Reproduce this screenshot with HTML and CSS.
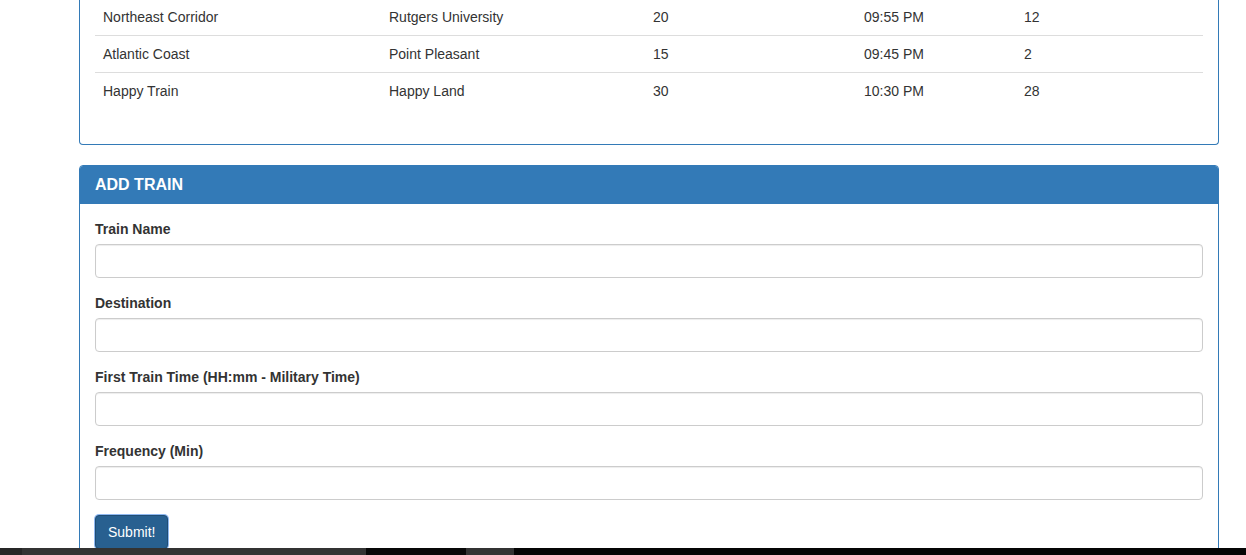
FILE: index.html
```html
<!DOCTYPE html>
<html>
<head>
<meta charset="utf-8">
<title>Train Scheduler</title>
<link rel="stylesheet" href="styles.css">
</head>
<body>
<main class="page">
  <section class="panel">
    <div class="panel-body">
      <table class="table">
        <colgroup>
          <col class="c1"><col class="c2"><col class="c3"><col class="c4"><col class="c5">
        </colgroup>
        <tbody>
          <tr class="first"><td>Northeast Corridor</td><td>Rutgers University</td><td>20</td><td>09:55 PM</td><td>12</td></tr>
          <tr><td>Atlantic Coast</td><td>Point Pleasant</td><td>15</td><td>09:45 PM</td><td>2</td></tr>
          <tr><td>Happy Train</td><td>Happy Land</td><td>30</td><td>10:30 PM</td><td>28</td></tr>
        </tbody>
      </table>
    </div>
  </section>

  <section class="panel panel-primary">
    <div class="panel-heading"><h3 class="panel-title">ADD TRAIN</h3></div>
    <div class="panel-body">
      <form class="form">
        <div class="form-group">
          <label class="label" for="name">Train Name</label>
          <input class="form-control" id="name" type="text">
        </div>
        <div class="form-group">
          <label class="label" for="dest">Destination</label>
          <input class="form-control" id="dest" type="text">
        </div>
        <div class="form-group">
          <label class="label" for="first">First Train Time (HH:mm - Military Time)</label>
          <input class="form-control" id="first" type="text">
        </div>
        <div class="form-group">
          <label class="label" for="freq">Frequency (Min)</label>
          <input class="form-control" id="freq" type="text">
        </div>
        <button class="btn" type="button">Submit!</button>
      </form>
    </div>
  </section>
</main>
<div class="taskbar">
  <span class="seg s1"></span><span class="seg s2"></span><span class="seg s3"></span><span class="seg s4"></span><span class="seg s5"></span>
</div>
</body>
</html>
```

FILE: styles.css
```css
* { box-sizing: border-box; }
html, body { margin: 0; padding: 0; background: #fff; }
body {
  font-family: "Liberation Sans", Arial, Helvetica, sans-serif;
  font-size: 14px;
  line-height: 20px;
  color: #333;
  overflow: hidden;
}
.page {
  width: 1140px;
  margin-left: 79px;
}
.panel {
  border: 1px solid #337ab7;
  border-radius: 4px;
  margin-bottom: 20px;
  background: #fff;
}
.panel > .panel-body { padding: 15px; }
.panel:first-child { border-top: none; border-top-left-radius: 0; border-top-right-radius: 0; }
.panel:first-child > .panel-body { padding-top: 0; }
.table {
  width: 100%;
  border-collapse: collapse;
  margin-bottom: 20px;
}
.c1 { width: 286px; }
.c2 { width: 264px; }
.c3 { width: 211px; }
.c4 { width: 160px; }
.c5 { width: 187px; }
.table td {
  padding: 8px;
  border-top: 1px solid #ddd;
  vertical-align: top;
  line-height: 20px;
}
.table tr.first td { border-top: none; padding-top: 7px; }
.panel-heading {
  background: #337ab7;
  color: #fff;
  padding: 10px 15px;
  border-top-left-radius: 3px;
  border-top-right-radius: 3px;
}
.panel-title {
  margin: 0;
  font-size: 16px;
  line-height: 18px;
  font-weight: bold;
}
.form-group { margin-bottom: 15px; display: flex; flex-direction: column; }
.label {
  font-weight: bold;
  margin-bottom: 5px;
  line-height: 20px;
}
.form-control {
  display: block;
  width: 100%;
  height: 34px;
  padding: 6px 12px;
  font-size: 14px;
  font-family: inherit;
  color: #555;
  background: #fff;
  border: 1px solid #ccc;
  border-radius: 4px;
  box-shadow: inset 0 1px 1px rgba(0,0,0,.075);
  margin: 0;
}
.btn {
  display: inline-block;
  padding: 6px 12px;
  font-family: inherit;
  font-size: 14px;
  line-height: 20px;
  color: #fff;
  background: #286090;
  border: 1px solid #204d74;
  border-radius: 4px;
  box-shadow: 0 0 0 1px #8fb8f0;
  cursor: pointer;
}
.taskbar {
  position: fixed;
  left: 0;
  right: 0;
  bottom: 0;
  height: 7px;
  display: flex;
}
.seg { display: block; height: 100%; }
.s1 { width: 22px; background: #262626; }
.s2 { width: 344px; background: #333; }
.s3 { width: 100px; background: #080808; }
.s4 { width: 48px; background: #333; }
.s5 { flex: 1; background: #050505; }
```
